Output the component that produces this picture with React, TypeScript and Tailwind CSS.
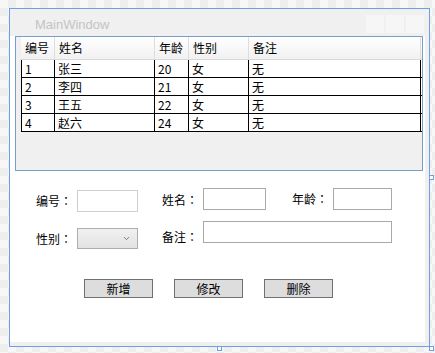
import { ChevronDown } from 'lucide-react';

const rows = [
  { id: '1', name: '张三', age: '20', sex: '女', note: '无' },
  { id: '2', name: '李四', age: '21', sex: '女', note: '无' },
  { id: '3', name: '王五', age: '22', sex: '女', note: '无' },
  { id: '4', name: '赵六', age: '24', sex: '女', note: '无' },
];

const headers = [
  { label: '编号', w: 'w-[34px]' },
  { label: '姓名', w: 'w-[100px]' },
  { label: '年龄', w: 'w-[34px]' },
  { label: '性别', w: 'w-[60px]' },
  { label: '备注', w: 'w-[172px]' },
];

function Handle({ className }: { className: string }) {
  return <div className={`absolute w-[5px] h-[5px] border border-[#6f9de6] bg-white ${className}`} />;
}

function Label({ text, className = '' }: { text: string; className?: string }) {
  return (
    <div className={`w-[41px] h-[22px] leading-[22px] text-[12px] text-black whitespace-nowrap ${className}`}>
      {text}
      <span className="font-['Noto_Sans_CJK_TC',sans-serif]">：</span>
    </div>
  );
}

function Btn({ text }: { text: string }) {
  return (
    <button className="w-[69px] h-[19px] border border-[#707070] bg-[#dddddd] text-[12px] leading-[17px] text-black">
      {text}
    </button>
  );
}

export default function App() {
  return (
    <div className="relative w-[435px] h-[353px] overflow-hidden pl-[9px] pt-[8px] bg-[image:repeating-conic-gradient(#eeeeee_0_25%,#f7f7f7_0_50%)] bg-size-[16px_16px] font-['Noto_Sans_CJK_SC','Noto_Sans',sans-serif]">
      <div className="w-[421px] h-[339px] border border-[#6f9de6] bg-[#f0f0f0] flex flex-col">
        {/* title bar */}
        <div className="h-[27px] flex items-start shrink-0">
          <div className="pl-[25px] pt-[8px] text-[13px] leading-[16px] text-[#c4c4c4] font-['Liberation_Sans',sans-serif]">MainWindow</div>
          <div className="ml-auto mr-[5px] mt-[6px] flex gap-[2px]">
            <div className="w-[18px] h-[18px] bg-[#f6f6f6]" />
            <div className="w-[18px] h-[18px] bg-[#f6f6f6]" />
            <div className="w-[18px] h-[18px] bg-[#f6f6f6]" />
          </div>
        </div>

        {/* central widget */}
        <div className="flex-1 bg-white mr-[4px] mb-[4px] flex flex-col">
          <div className="ml-[5px] w-[408px] h-[135px] border border-[#7a9ccc] bg-[#f0f0f0] shrink-0">
            <div className="ml-[5px] flex h-[23px] border-b border-[#d8d8d8] bg-linear-to-b from-white to-[#f1f1f1]">
              {headers.map((h) => (
                <div key={h.label} className={`${h.w} h-full border-r border-[#dddddd] pl-[4px] text-[12px] leading-[22px] text-black`}>
                  {h.label}
                </div>
              ))}
            </div>
            {rows.map((r) => (
              <div key={r.id} className="ml-[5px] flex h-[18px] border-l border-b border-black bg-white text-[12px] leading-[17px] text-black">
                <div className="w-[33px] border-r border-black pl-[3px]">{r.id}</div>
                <div className="w-[100px] border-r border-black pl-[3px]">{r.name}</div>
                <div className="w-[34px] border-r border-black pl-[3px]">{r.age}</div>
                <div className="w-[60px] border-r border-black pl-[3px]">{r.sex}</div>
                <div className="w-[172px] border-r border-black pl-[3px]">{r.note}</div>
              </div>
            ))}
          </div>

          {/* form row 1 */}
          <div className="mt-[17px] ml-[26px] flex items-start">
            <Label text="编号" className="mt-[2px]" />
            <div className="w-[61px] h-[22px] mt-[2px] border border-[#cfcfcf] bg-white" />
            <Label text="姓名" className="ml-[24px] mt-[1px]" />
            <div className="w-[63px] h-[22px] border border-[#a9a9a9] bg-white" />
            <Label text="年龄" className="ml-[26px]" />
            <div className="w-[59px] h-[22px] border border-[#a9a9a9] bg-white" />
          </div>

          {/* form row 2 */}
          <div className="mt-[9px] ml-[26px] flex items-start">
            <Label text="性别" className="mt-[7px]" />
            <div className="w-[61px] h-[21px] mt-[7px] border border-[#adadad] bg-linear-to-b from-[#f0f0f0] to-[#e3e3e3] flex items-center justify-end pr-[6px]">
              <ChevronDown size={9} strokeWidth={2} className="text-[#555555]" />
            </div>
            <Label text="备注" className="ml-[24px] mt-[5px]" />
            <div className="w-[189px] h-[22px] border border-[#a9a9a9] bg-white" />
          </div>

          {/* buttons */}
          <div className="mt-[29px] ml-[74px] flex gap-[21px]">
            <Btn text="新增" />
            <Btn text="修改" />
            <Btn text="删除" />
          </div>
        </div>
      </div>

      <Handle className="left-[429px] top-[175px]" />
      <Handle className="left-[217px] top-[346px]" />
      <Handle className="left-[429px] top-[346px]" />
    </div>
  );
}
